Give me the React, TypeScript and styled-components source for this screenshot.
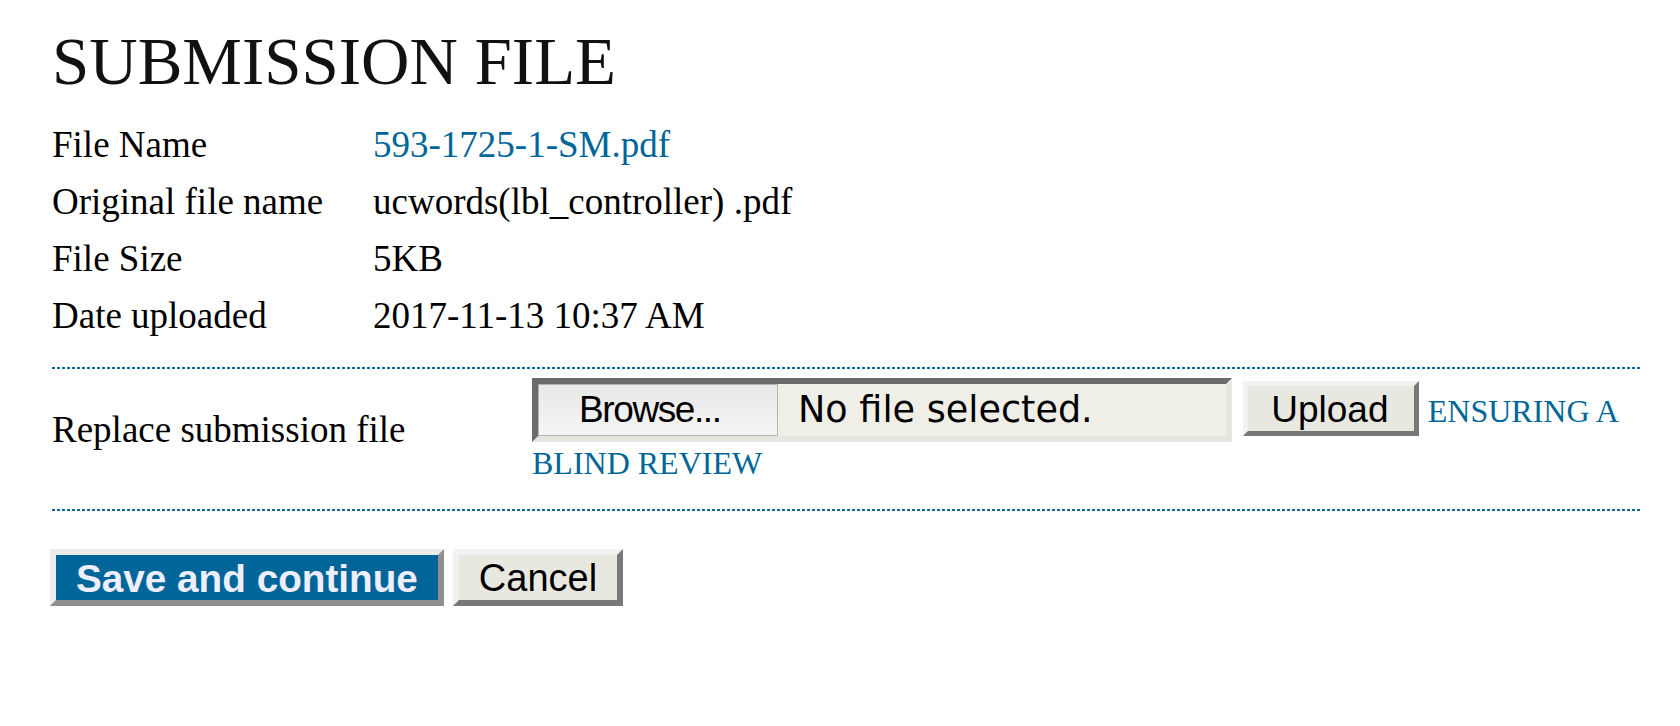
import React from "react";
import styled, { createGlobalStyle } from "styled-components";

const GlobalStyle = createGlobalStyle`
  html, body { margin: 0; padding: 0; background: #ffffff; }
  body {
    font-family: "Liberation Serif", "Times New Roman", serif;
    color: #000000;
  }
`;

const Page = styled.div`
  padding: 28px 39px 0 52px;
`;

const Title = styled.h2`
  margin: 0;
  font-size: 67px;
  line-height: 67px;
  font-weight: 400;
  color: #111111;
`;

const InfoTable = styled.dl`
  display: grid;
  grid-template-columns: 321px 1fr;
  margin: 21px 0 0;
  font-size: 37px;
  line-height: 57px;
`;

const InfoLabel = styled.dt`
  margin: 0;
`;

const InfoValue = styled.dd`
  margin: 0;
`;

const TextLink = styled.a<{ $size?: number }>`
  color: #006699;
  text-decoration: none;
  font-size: ${(p) => (p.$size ? `${p.$size}px` : "inherit")};
`;

const Divider = styled.div<{ $gap: number }>`
  height: 2px;
  margin-top: ${(p) => p.$gap}px;
  margin-left: -1px;
  background: radial-gradient(circle, #0c6497 0 1.1px, rgba(12, 100, 151, 0) 1.6px) 0 0 / 5px 2px repeat-x;
`;

const FormRow = styled.div`
  display: flex;
  margin-top: 9px;
  font-size: 37px;
  line-height: 39px;
`;

const FormLabel = styled.div`
  flex: none;
  width: 480px;
  align-self: center;
  padding-bottom: 2px;
`;

const FormField = styled.div`
  flex: 1;
  min-width: 0;
`;

const FileInput = styled.span`
  display: inline-flex;
  align-items: flex-start;
  box-sizing: border-box;
  width: 700px;
  height: 64px;
  margin-right: 2px;
  border: 6px solid;
  border-color: #6b6b6b #e6e6de #e6e6de #6b6b6b;
  background: #efefe8;
  vertical-align: baseline;
`;

const BrowseButton = styled.button`
  flex: none;
  box-sizing: border-box;
  width: 240px;
  margin: 0;
  padding: 3px 0 4px 40px;
  border: 1px solid #b3b3b3;
  background: linear-gradient(#e8e8e8, #f5f5f5);
  font: 400 37px/43px "Liberation Sans", Arial, sans-serif;
  letter-spacing: -1.4px;
  color: #000000;
  text-align: left;
`;

const FileStatus = styled.span`
  padding: 4px 0 0 20px;
  font: 400 36.6px/43px "DejaVu Sans", Verdana, sans-serif;
  color: #000000;
  white-space: nowrap;
`;

type Variant = "primary" | "default" | "small";

const BevelButton = styled.button<{ $variant: Variant }>`
  margin: 0;
  border-style: solid;
  border-width: ${(p) => (p.$variant === "small" ? 5 : 6)}px;
  border-color: ${(p) =>
    p.$variant === "primary"
      ? "#ececec #8f8f8f #8f8f8f #ececec"
      : "#f2f2f2 #787878 #787878 #f2f2f2"};
  padding: ${(p) => (p.$variant === "small" ? "3px 25px 0 23px" : "2px 20px 0")};
  background: ${(p) => (p.$variant === "primary" ? "#006699" : "#e8e8e1")};
  color: ${(p) => (p.$variant === "primary" ? "#eeeeff" : "#000000")};
  font-family: "Liberation Sans", Arial, sans-serif;
  font-weight: ${(p) => (p.$variant === "primary" ? 700 : 400)};
  font-size: ${(p) => (p.$variant === "primary" ? 38.7 : p.$variant === "small" ? 37 : 38)}px;
  line-height: ${(p) => (p.$variant === "small" ? 42 : 43)}px;
  white-space: nowrap;
  vertical-align: baseline;
`;

const Actions = styled.div`
  display: flex;
  align-items: flex-start;
  gap: 9px;
  margin: 38px 0 0 -2px;
`;

const rows: { label: string; value: string; link?: boolean }[] = [
  { label: "File Name", value: "593-1725-1-SM.pdf", link: true },
  { label: "Original file name", value: "ucwords(lbl_controller) .pdf" },
  { label: "File Size", value: "5KB" },
  { label: "Date uploaded", value: "2017-11-13 10:37 AM" },
];

export default function App() {
  return (
    <>
      <GlobalStyle />
      <Page>
        <Title>SUBMISSION FILE</Title>
        <InfoTable>
          {rows.map((r) => (
            <React.Fragment key={r.label}>
              <InfoLabel>{r.label}</InfoLabel>
              <InfoValue>
                {r.link ? <TextLink href="#">{r.value}</TextLink> : r.value}
              </InfoValue>
            </React.Fragment>
          ))}
        </InfoTable>
        <Divider $gap={23} />
        <FormRow>
          <FormLabel>Replace submission file</FormLabel>
          <FormField>
            <FileInput>
              <BrowseButton type="button">Browse...</BrowseButton>
              <FileStatus>No file selected.</FileStatus>
            </FileInput>{" "}
            <BevelButton type="button" $variant="small">
              Upload
            </BevelButton>{" "}
            <TextLink href="#" $size={32}>
              ENSURING A BLIND REVIEW
            </TextLink>
          </FormField>
        </FormRow>
        <Divider $gap={26} />
        <Actions>
          <BevelButton type="button" $variant="primary">
            Save and continue
          </BevelButton>
          <BevelButton type="button" $variant="default">
            Cancel
          </BevelButton>
        </Actions>
      </Page>
    </>
  );
}
